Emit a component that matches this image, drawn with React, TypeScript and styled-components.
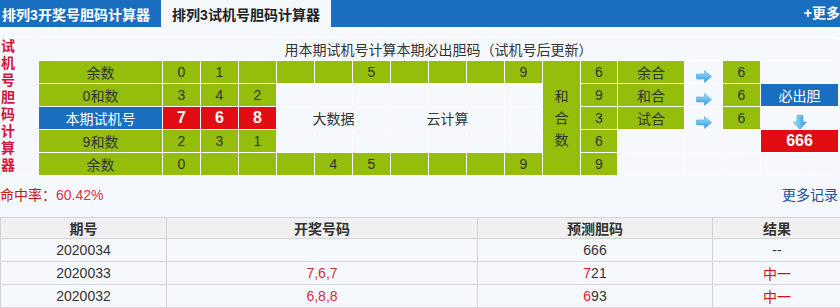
import React from 'react'
import styled, { createGlobalStyle } from 'styled-components'

type Tone = 'green' | 'blue' | 'red' | 'plain'

const PAGE_BG = '#f5f9fd'

const toneBg: Record<Tone, string> = {
  green: '#94be0b',
  blue: '#1a6ec2',
  red: '#e20d12',
  plain: PAGE_BG,
}

const GlobalStyle = createGlobalStyle`
  html, body {
    margin: 0;
    padding: 0;
    background: ${PAGE_BG};
    overflow: hidden;
  }
  body {
    font-family: 'Liberation Sans', 'Noto Sans CJK SC', sans-serif;
    font-size: 14px;
    color: #333;
  }
`

const TabBar = styled.div`
  display: flex;
  height: 27px;
  background: #1a6ec0;
`

const Tab = styled.div<{ $active?: boolean }>`
  width: 170px;
  display: flex;
  align-items: center;
  justify-content: center;
  font-size: 14px;
  font-weight: bold;
  white-space: nowrap;
  color: ${p => (p.$active ? '#222' : '#fff')};
  background: ${p => (p.$active ? PAGE_BG : 'transparent')};

  &:first-child {
    margin-left: -9px;
  }
`

const MoreLink = styled.a`
  margin-left: auto;
  line-height: 27px;
  color: #fff;
  font-weight: bold;
  white-space: nowrap;
  text-decoration: none;
`

const Board = styled.div`
  margin-top: 10px;
  display: grid;
  grid-template-columns: 38px 123px repeat(10, 37px) 37px 36px 66px 37px 37px 77px;
  grid-template-rows: repeat(6, 22px);
  gap: 1px;
  padding: 1px 1px 1px 0;
  width: max-content;
  background: #fff;
`

const Side = styled.div`
  grid-row: span 6;
  background: ${PAGE_BG};
  padding: 0 0 0 1px;
`

const SideText = styled.div`
  width: 16px;
  line-height: 17px;
  font-size: 14px;
  font-weight: bold;
  word-break: break-all;
  color: #d4143c;
`

const Title = styled.div`
  grid-column: span 17;
  display: flex;
  align-items: center;
  justify-content: center;
  background: ${PAGE_BG};
  font-size: 14px;
  color: #333;
`

const Cell = styled.div<{ $tone?: Tone; $span?: number; $rows?: number }>`
  grid-column: span ${p => p.$span ?? 1};
  grid-row: span ${p => p.$rows ?? 1};
  display: flex;
  align-items: center;
  justify-content: center;
  white-space: nowrap;
  background: ${p => toneBg[p.$tone ?? 'plain']};
  color: ${p => (p.$tone === 'blue' || p.$tone === 'red' ? '#fff' : '#333')};
  font-size: ${p => (p.$tone === 'red' ? '16px' : '14px')};
  font-weight: ${p => (p.$tone === 'red' ? 'bold' : 'normal')};
`

const ArrowCell = styled(Cell)`
  align-items: flex-start;
  padding-top: 9px;
`

const DownCell = styled(Cell)`
  align-items: flex-start;
  padding-top: 8px;
`

const VerticalText = styled.span`
  width: 1em;
  line-height: 22px;
  white-space: normal;
  word-break: break-all;
  text-align: center;
`

const StatsRow = styled.div`
  display: flex;
  justify-content: space-between;
  align-items: center;
  margin: 9px 0 12px;
  padding-right: 2px;
  line-height: 20px;
`

const HitRate = styled.div`
  color: #c81414;
`

const HitValue = styled.span`
  color: #dd2f4a;
`

const RecordsLink = styled.a`
  color: #1c4fa0;
  text-decoration: none;
`

const Records = styled.table`
  width: 841px;
  border-collapse: collapse;
  table-layout: fixed;
`

const HeadCell = styled.th`
  height: 18px;
  padding: 0;
  border: 1px solid #d4d4d4;
  background: #f0f0f0;
  color: #333;
  font-weight: bold;
  font-size: 14px;
  text-align: center;
`

const DataCell = styled.td<{ $hot?: boolean }>`
  height: 22px;
  padding: 0;
  border: 1px solid #d4d4d4;
  text-align: center;
  font-size: 14px;
  color: ${p => (p.$hot ? '#d42a3a' : '#333')};
`

const Lead = styled.span`
  color: #f0102a;
`

const Win = styled.span`
  color: #d01010;
`

const RightArrow = () => (
  <svg width="16" height="13" viewBox="0 0 16 13">
    <defs>
      <linearGradient id="ra" x1="0" y1="0" x2="0" y2="1">
        <stop offset="0" stopColor="#a8e4ff" />
        <stop offset="1" stopColor="#2994dc" />
      </linearGradient>
    </defs>
    <path d="M0.5 4 H8.5 V0.5 L15.5 6.5 L8.5 12.5 V9 H0.5 Z" fill="url(#ra)" stroke="#4aa8e0" strokeWidth="0.6" />
  </svg>
)

const DownArrow = () => (
  <svg width="14" height="15" viewBox="0 0 14 15">
    <defs>
      <linearGradient id="da" x1="0" y1="0" x2="1" y2="0">
        <stop offset="0" stopColor="#a8e4ff" />
        <stop offset="1" stopColor="#2994dc" />
      </linearGradient>
    </defs>
    <path d="M4 0.5 H10 V7 H13.5 L7 14.5 L0.5 7 H4 Z" fill="url(#da)" stroke="#4aa8e0" strokeWidth="0.6" />
  </svg>
)

const greenRow = (digits: string[]) => digits.map((d, i) => <Cell key={i} $tone="green">{d}</Cell>)

const partialRow = (digits: string[]) => (
  <>
    {greenRow(digits)}
    {Array.from({ length: 10 - digits.length }).map((_, i) => <Cell key={'p' + i} />)}
  </>
)

const records = [
  { issue: '2020034', draw: '', lead: '6', rest: '66', result: '--' },
  { issue: '2020033', draw: '7,6,7', lead: '7', rest: '21', result: '中一' },
  { issue: '2020032', draw: '6,8,8', lead: '6', rest: '93', result: '中一' },
]

export default function App() {
  return (
    <>
      <GlobalStyle />
      <TabBar>
        <Tab>排列3开奖号胆码计算器</Tab>
        <Tab $active>排列3试机号胆码计算器</Tab>
        <MoreLink>+更多</MoreLink>
      </TabBar>

      <Board>
        <Side>
          <SideText>试机号胆码计算器</SideText>
        </Side>
        <Title>用本期试机号计算本期必出胆码（试机号后更新）</Title>

        {/* row 1 */}
        <Cell $tone="green">余数</Cell>
        {greenRow(['0', '1', '', '', '', '5', '', '', '', '9'])}
        <Cell $tone="green" $rows={5}>
          <VerticalText>和合数</VerticalText>
        </Cell>
        <Cell $tone="green">6</Cell>
        <Cell $tone="green">余合</Cell>
        <ArrowCell><RightArrow /></ArrowCell>
        <Cell $tone="green">6</Cell>
        <Cell />

        {/* row 2 */}
        <Cell $tone="green">0和数</Cell>
        {partialRow(['3', '4', '2'])}
        <Cell $tone="green">9</Cell>
        <Cell $tone="green">和合</Cell>
        <ArrowCell><RightArrow /></ArrowCell>
        <Cell $tone="green">6</Cell>
        <Cell $tone="blue">必出胆</Cell>

        {/* row 3 */}
        <Cell $tone="blue">本期试机号</Cell>
        <Cell $tone="red">7</Cell>
        <Cell $tone="red">6</Cell>
        <Cell $tone="red">8</Cell>
        <Cell $span={3}>大数据</Cell>
        <Cell $span={3}>云计算</Cell>
        <Cell />
        <Cell $tone="green">3</Cell>
        <Cell $tone="green">试合</Cell>
        <ArrowCell><RightArrow /></ArrowCell>
        <Cell $tone="green">6</Cell>
        <DownCell><DownArrow /></DownCell>

        {/* row 4 */}
        <Cell $tone="green">9和数</Cell>
        {partialRow(['2', '3', '1'])}
        <Cell $tone="green">6</Cell>
        <Cell />
        <Cell />
        <Cell />
        <Cell $tone="red">666</Cell>

        {/* row 5 */}
        <Cell $tone="green">余数</Cell>
        {greenRow(['0', '', '', '', '4', '5', '', '', '', '9'])}
        <Cell $tone="green">9</Cell>
        <Cell />
        <Cell />
        <Cell />
        <Cell />
      </Board>

      <StatsRow>
        <HitRate>
          命中率：<HitValue>60.42%</HitValue>
        </HitRate>
        <RecordsLink>更多记录</RecordsLink>
      </StatsRow>

      <Records>
        <colgroup>
          <col style={{ width: 166 }} />
          <col style={{ width: 311 }} />
          <col style={{ width: 235 }} />
          <col style={{ width: 129 }} />
        </colgroup>
        <thead>
          <tr>
            <HeadCell>期号</HeadCell>
            <HeadCell>开奖号码</HeadCell>
            <HeadCell>预测胆码</HeadCell>
            <HeadCell>结果</HeadCell>
          </tr>
        </thead>
        <tbody>
          {records.map(r => (
            <tr key={r.issue}>
              <DataCell>{r.issue}</DataCell>
              <DataCell $hot>{r.draw}</DataCell>
              <DataCell>
                {r.result === '--' ? r.lead : <Lead>{r.lead}</Lead>}
                {r.rest}
              </DataCell>
              <DataCell>{r.result === '--' ? r.result : <Win>{r.result}</Win>}</DataCell>
            </tr>
          ))}
        </tbody>
      </Records>
    </>
  )
}
